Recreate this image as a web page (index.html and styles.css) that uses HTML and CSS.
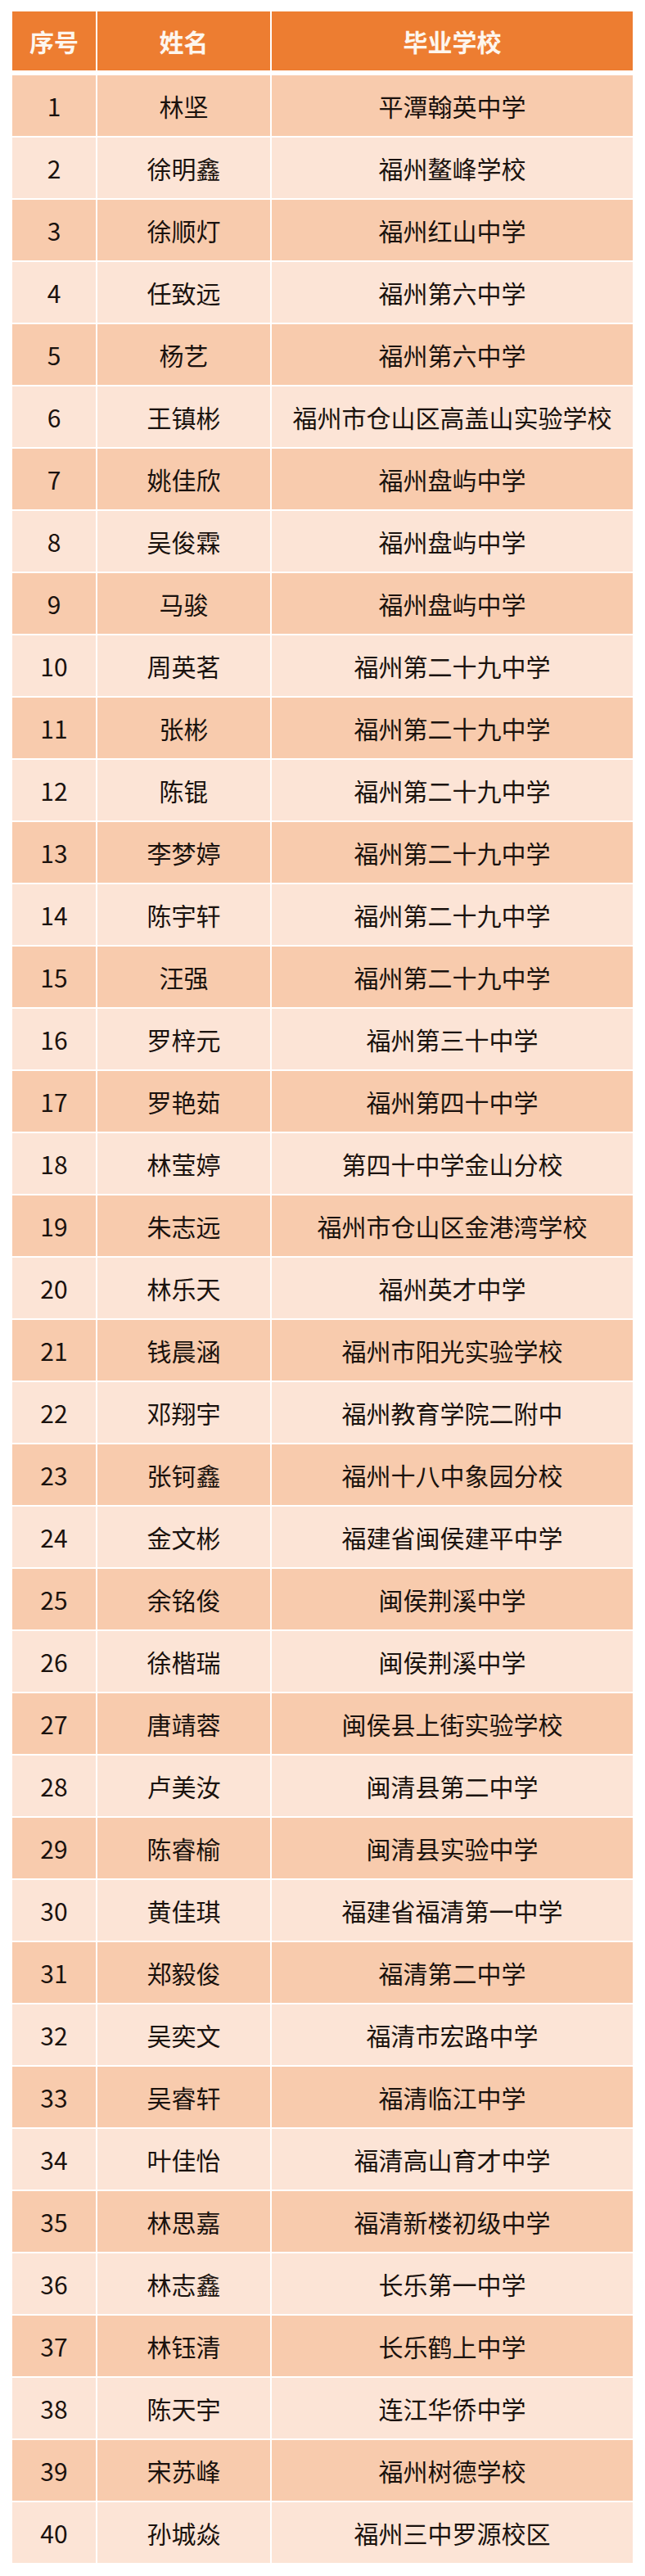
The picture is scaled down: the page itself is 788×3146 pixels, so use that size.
FILE: index.html
```html
<!DOCTYPE html>
<html lang="zh-CN">
<head>
<meta charset="utf-8">
<title>名单</title>
<link rel="stylesheet" href="styles.css">
</head>
<body>
<div class="sheet">
  <div class="row head"><div class="cell">序号</div><div class="cell">姓名</div><div class="cell">毕业学校</div></div>
  <div class="rows">
    <div class="row odd"><div class="cell">1</div><div class="cell">林坚</div><div class="cell">平潭翰英中学</div></div>
    <div class="row even"><div class="cell">2</div><div class="cell">徐明鑫</div><div class="cell">福州鳌峰学校</div></div>
    <div class="row odd"><div class="cell">3</div><div class="cell">徐顺灯</div><div class="cell">福州红山中学</div></div>
    <div class="row even"><div class="cell">4</div><div class="cell">任致远</div><div class="cell">福州第六中学</div></div>
    <div class="row odd"><div class="cell">5</div><div class="cell">杨艺</div><div class="cell">福州第六中学</div></div>
    <div class="row even"><div class="cell">6</div><div class="cell">王镇彬</div><div class="cell">福州市仓山区高盖山实验学校</div></div>
    <div class="row odd"><div class="cell">7</div><div class="cell">姚佳欣</div><div class="cell">福州盘屿中学</div></div>
    <div class="row even"><div class="cell">8</div><div class="cell">吴俊霖</div><div class="cell">福州盘屿中学</div></div>
    <div class="row odd"><div class="cell">9</div><div class="cell">马骏</div><div class="cell">福州盘屿中学</div></div>
    <div class="row even"><div class="cell">10</div><div class="cell">周英茗</div><div class="cell">福州第二十九中学</div></div>
    <div class="row odd"><div class="cell">11</div><div class="cell">张彬</div><div class="cell">福州第二十九中学</div></div>
    <div class="row even"><div class="cell">12</div><div class="cell">陈锟</div><div class="cell">福州第二十九中学</div></div>
    <div class="row odd"><div class="cell">13</div><div class="cell">李梦婷</div><div class="cell">福州第二十九中学</div></div>
    <div class="row even"><div class="cell">14</div><div class="cell">陈宇轩</div><div class="cell">福州第二十九中学</div></div>
    <div class="row odd"><div class="cell">15</div><div class="cell">汪强</div><div class="cell">福州第二十九中学</div></div>
    <div class="row even"><div class="cell">16</div><div class="cell">罗梓元</div><div class="cell">福州第三十中学</div></div>
    <div class="row odd"><div class="cell">17</div><div class="cell">罗艳茹</div><div class="cell">福州第四十中学</div></div>
    <div class="row even"><div class="cell">18</div><div class="cell">林莹婷</div><div class="cell">第四十中学金山分校</div></div>
    <div class="row odd"><div class="cell">19</div><div class="cell">朱志远</div><div class="cell">福州市仓山区金港湾学校</div></div>
    <div class="row even"><div class="cell">20</div><div class="cell">林乐天</div><div class="cell">福州英才中学</div></div>
    <div class="row odd"><div class="cell">21</div><div class="cell">钱晨涵</div><div class="cell">福州市阳光实验学校</div></div>
    <div class="row even"><div class="cell">22</div><div class="cell">邓翔宇</div><div class="cell">福州教育学院二附中</div></div>
    <div class="row odd"><div class="cell">23</div><div class="cell">张钶鑫</div><div class="cell">福州十八中象园分校</div></div>
    <div class="row even"><div class="cell">24</div><div class="cell">金文彬</div><div class="cell">福建省闽侯建平中学</div></div>
    <div class="row odd"><div class="cell">25</div><div class="cell">余铭俊</div><div class="cell">闽侯荆溪中学</div></div>
    <div class="row even"><div class="cell">26</div><div class="cell">徐楷瑞</div><div class="cell">闽侯荆溪中学</div></div>
    <div class="row odd"><div class="cell">27</div><div class="cell">唐靖蓉</div><div class="cell">闽侯县上街实验学校</div></div>
    <div class="row even"><div class="cell">28</div><div class="cell">卢美汝</div><div class="cell">闽清县第二中学</div></div>
    <div class="row odd"><div class="cell">29</div><div class="cell">陈睿榆</div><div class="cell">闽清县实验中学</div></div>
    <div class="row even"><div class="cell">30</div><div class="cell">黄佳琪</div><div class="cell">福建省福清第一中学</div></div>
    <div class="row odd"><div class="cell">31</div><div class="cell">郑毅俊</div><div class="cell">福清第二中学</div></div>
    <div class="row even"><div class="cell">32</div><div class="cell">吴奕文</div><div class="cell">福清市宏路中学</div></div>
    <div class="row odd"><div class="cell">33</div><div class="cell">吴睿轩</div><div class="cell">福清临江中学</div></div>
    <div class="row even"><div class="cell">34</div><div class="cell">叶佳怡</div><div class="cell">福清高山育才中学</div></div>
    <div class="row odd"><div class="cell">35</div><div class="cell">林思嘉</div><div class="cell">福清新楼初级中学</div></div>
    <div class="row even"><div class="cell">36</div><div class="cell">林志鑫</div><div class="cell">长乐第一中学</div></div>
    <div class="row odd"><div class="cell">37</div><div class="cell">林钰清</div><div class="cell">长乐鹤上中学</div></div>
    <div class="row even"><div class="cell">38</div><div class="cell">陈天宇</div><div class="cell">连江华侨中学</div></div>
    <div class="row odd"><div class="cell">39</div><div class="cell">宋苏峰</div><div class="cell">福州树德学校</div></div>
    <div class="row even"><div class="cell">40</div><div class="cell">孙城焱</div><div class="cell">福州三中罗源校区</div></div>
  </div>
</div>
</body>
</html>
```

FILE: styles.css
```css
html, body {
  margin: 0;
  padding: 0;
  background: #ffffff;
}

body {
  font-family: "Noto Sans CJK SC", "Noto Sans", sans-serif;
  color: #1a120e;
}

.sheet {
  padding: 14px 15px 16px 15px;
  width: 758px;
}

.row {
  display: grid;
  grid-template-columns: 102px 211px 441px;
  column-gap: 2px;
  height: 74px;
}

.cell {
  display: flex;
  align-items: center;
  justify-content: center;
  font-size: 30px;
  line-height: 1;
  white-space: nowrap;
}

.head {
  height: 72px;
  margin-bottom: 6px;
}

.head .cell {
  background: #ed7d31;
  color: #fdf6ee;
  font-weight: 700;
}

.rows {
  display: flex;
  flex-direction: column;
  gap: 2px;
}

.odd .cell {
  background: #f8cbad;
}

.even .cell {
  background: #fce4d6;
}
```
